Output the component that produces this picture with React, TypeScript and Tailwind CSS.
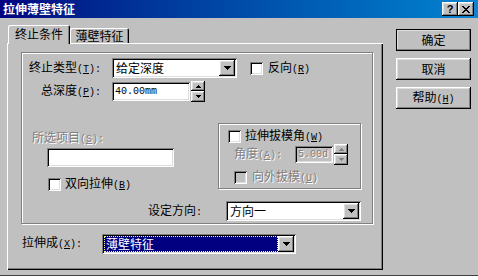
import React from 'react';

const raised =
  'bg-[#c0c0c0] shadow-[inset_-1px_-1px_#000,inset_1px_1px_#fff,inset_-2px_-2px_#808080,inset_2px_2px_#dfdfdf]';
const sunken =
  'shadow-[inset_1px_1px_#808080,inset_-1px_-1px_#fff,inset_2px_2px_#000,inset_-2px_-2px_#dfdfdf]';
const etched = 'border border-[#808080] shadow-[inset_1px_1px_#fff,1px_1px_#fff]';
const mono = "font-['Liberation_Mono',monospace] text-[10px]";
const dim = 'text-[#808080] [text-shadow:1px_1px_0_#fff]';

function Key({ k, colon }: { k: string; colon?: boolean }) {
  return (
    <span className={mono}>
      (<span className="underline">{k}</span>){colon ? ':' : ''}
    </span>
  );
}

function Arrow({ up }: { up?: boolean }) {
  return (
    <svg width="7" height="4" viewBox="0 0 7 4" shapeRendering="crispEdges" className={up ? 'rotate-180' : ''}>
      <path d="M0 0H7V1H6V2H5V3H4V4H3V3H2V2H1V1H0Z" fill="#000" />
    </svg>
  );
}

function SmallArrow({ up, off }: { up?: boolean; off?: boolean }) {
  return (
    <svg width="5" height="3" viewBox="0 0 5 3" shapeRendering="crispEdges" className={up ? 'rotate-180' : ''}>
      <path d="M0 0H5V1H4V2H3V3H2V2H1V1H0Z" fill={off ? '#808080' : '#000'} />
    </svg>
  );
}

function Check({ off }: { off?: boolean }) {
  return <div className={`w-[13px] h-[13px] shrink-0 ${off ? 'bg-[#c0c0c0]' : 'bg-white'} ${sunken}`} />;
}

function Select({ w, text, picked }: { w: string; text: string; picked?: boolean }) {
  return (
    <div className={`${w} h-[20px] bg-white ${sunken} flex items-center p-[2px] shrink-0`}>
      {picked ? (
        <div className="flex-1 h-[16px] bg-[#000080] text-white leading-[16px] pl-[2px] outline-1 outline-dotted outline-[#ffff80] -outline-offset-1">
          {text}
        </div>
      ) : (
        <div className="flex-1 leading-[16px] pl-[2px]">{text}</div>
      )}
      <div className={`w-[16px] h-[16px] ${raised} flex items-center justify-center`}>
        <Arrow />
      </div>
    </div>
  );
}

function Spinner({ off }: { off?: boolean }) {
  return (
    <div className="w-[14px] h-[21px] flex flex-col shrink-0">
      <div className={`h-[10px] ${raised} flex items-center justify-center`}>
        <SmallArrow up off={off} />
      </div>
      <div className={`h-[11px] ${raised} flex items-center justify-center`}>
        <SmallArrow off={off} />
      </div>
    </div>
  );
}

function Button({ label, main }: { label: React.ReactNode; main?: boolean }) {
  return (
    <div
      className={`w-[75px] h-[22px] ${raised} flex items-center justify-center leading-[14px] ${
        main ? 'outline outline-1 outline-black -outline-offset-1' : ''
      }`}
    >
      {label}
    </div>
  );
}

export default function App() {
  return (
    <div className="w-[478px] h-[280px] overflow-hidden bg-white font-['Noto_Sans_CJK_SC','Noto_Sans',sans-serif] text-[12px] text-black">
      <div className="h-[276px] bg-[#c0c0c0] border-b border-[#404040] flex flex-col">
        {/* title bar */}
        <div className="h-[18px] shrink-0 bg-gradient-to-r from-[#000080] to-[#1084d0] flex items-center justify-between pl-[3px] pr-[4px]">
          <span className="text-white font-bold leading-[14px]">拉伸薄壁特征</span>
          <div className="flex">
            <div className={`w-[16px] h-[14px] ${raised} flex items-center justify-center font-bold text-[11px] leading-none font-['Liberation_Sans',sans-serif]`}>
              ?
            </div>
            <div className={`w-[16px] h-[14px] ${raised} flex items-center justify-center`}>
              <svg width="8" height="7" viewBox="0 0 8 7" shapeRendering="crispEdges">
                <path d="M0 0h2v1h1v1h2V1h1V0h2v1H7v1H6v1H5v1h1v1h1v1h1v1H6V6H5V5H3v1H2v1H0V6h1V5h1V4h1V3H2V2H1V1H0Z" fill="#000" />
              </svg>
            </div>
          </div>
        </div>

        <div className="flex">
          <div className="ml-[7px] mt-[7px] w-[376px] flex flex-col">
            {/* tabs */}
            <div className="flex items-end h-[18px]">
              <div className="relative z-10 ml-[1px] w-[62px] h-[19px] -mb-px bg-[#c0c0c0] rounded-t-[2px] shadow-[inset_1px_1px_#fff,inset_-1px_0_#000,inset_-2px_0_#808080] flex justify-center pt-[2px] leading-[14px]">
                终止条件
              </div>
              <div className="w-[59px] h-[15px] rounded-t-[2px] shadow-[inset_1px_1px_#fff,inset_-1px_0_#000,inset_-2px_0_#808080] flex justify-center pt-[1px] leading-[14px]">
                薄壁特征
              </div>
            </div>

            {/* panel */}
            <div className="h-[227px] shadow-[inset_1px_1px_#fff,inset_-1px_-1px_#000,inset_-2px_-2px_#808080] pt-[9px] pl-[14px] flex flex-col">
              <div className={`w-[352px] h-[172px] ${etched} flex flex-col`}>
                <div className="mt-[5px] h-[20px] flex items-center">
                  <span className="w-[90px] pr-[11px] text-right leading-[14px]">
                    终止类型<Key k="T" colon />
                  </span>
                  <Select w="w-[125px]" text="给定深度" />
                  <div className="ml-[13px]">
                    <Check />
                  </div>
                  <span className="ml-[5px] leading-[14px]">
                    反向<Key k="R" />
                  </span>
                </div>

                <div className="mt-[3px] h-[21px] flex items-center">
                  <span className="w-[90px] pr-[11px] text-right leading-[14px]">
                    总深度<Key k="P" colon />
                  </span>
                  <div className={`w-[78px] h-[19px] bg-white ${sunken} flex items-center pl-[3px] font-['Liberation_Mono',monospace] text-[10px]`}>
                    40.00mm
                  </div>
                  <div className="ml-[1px]">
                    <Spinner />
                  </div>
                </div>

                <div className="mt-[21px] flex">
                  <div className="w-[196px] flex flex-col">
                    <span className={`mt-[7px] pl-[10px] leading-[14px] ${dim}`}>
                      所选项目<Key k="S" colon />
                    </span>
                    <div className={`mt-[1px] ml-[25px] w-[127px] h-[19px] bg-white ${sunken}`} />
                    <div className="mt-[9px] ml-[26px] flex items-center">
                      <Check />
                      <span className="ml-[4px] leading-[14px]">
                        双向拉伸<Key k="B" />
                      </span>
                    </div>
                  </div>

                  <div className={`w-[143px] h-[66px] ${etched} flex flex-col`}>
                    <div className="mt-[6px] ml-[9px] flex items-center h-[13px]">
                      <Check />
                      <span className="ml-[4px] leading-[14px]">
                        拉伸拔模角<Key k="W" />
                      </span>
                    </div>
                    <div className="mt-[1px] h-[21px] flex items-center">
                      <span className={`ml-[15px] w-[61px] leading-[14px] ${dim}`}>
                        角度<Key k="A" colon />
                      </span>
                      <div className={`w-[38px] h-[17px] bg-[#c0c0c0] ${sunken} flex items-center pl-[3px] ${mono} ${dim}`}>
                        5.00d
                      </div>
                      <div className="ml-[1px]">
                        <Spinner off />
                      </div>
                    </div>
                    <div className="mt-[4px] ml-[15px] flex items-center">
                      <Check off />
                      <span className={`ml-[5px] leading-[14px] ${dim}`}>
                        向外拔模<Key k="U" />
                      </span>
                    </div>
                  </div>
                </div>

                <div className="mt-[8px] h-[20px] flex items-center">
                  <span className="ml-[126px] w-[78px] leading-[14px]">
                    设定方向<span className={mono}>:</span>
                  </span>
                  <Select w="w-[135px]" text="方向一" />
                </div>
              </div>

              <div className="mt-[9px] h-[21px] flex items-center">
                <span className="ml-[1px] w-[80px] leading-[14px]">
                  拉伸成<Key k="X" colon />
                </span>
                <Select w="w-[194px]" text="薄壁特征" picked />
              </div>
            </div>
          </div>

          {/* buttons */}
          <div className="ml-[13px] mt-[11px] flex flex-col gap-[7px]">
            <Button label="确定" main />
            <Button label="取消" />
            <Button
              label={
                <span>
                  帮助<Key k="H" />
                </span>
              }
            />
          </div>
        </div>
      </div>
    </div>
  );
}
